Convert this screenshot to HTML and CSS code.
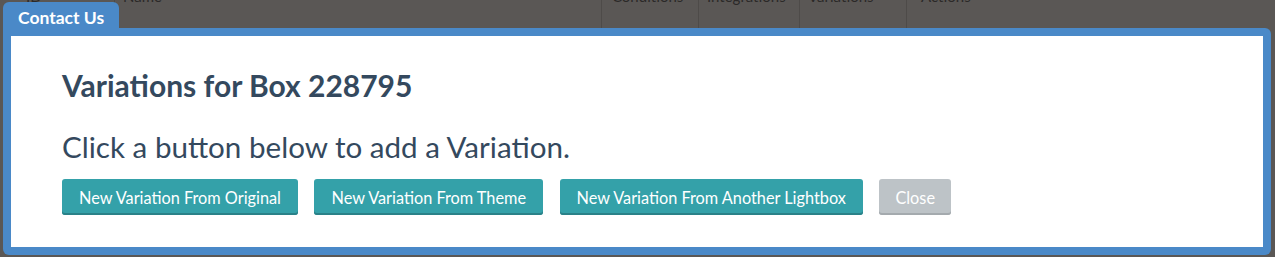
FILE: index.html
```html
<!DOCTYPE html>
<html>
<head>
<meta charset="utf-8">
<link rel="stylesheet" href="styles.css">
</head>
<body>
<div class="table-bg">
  <div class="thead">
    <div class="th th-id">ID</div>
    <div class="th th-name">Name</div>
    <div class="th th-cond">Conditions</div>
    <div class="th th-int">Integrations</div>
    <div class="th th-var">Variations</div>
    <div class="th th-act">Actions</div>
  </div>
</div>
<div class="modal">
  <div class="tab">Contact Us</div>
  <div class="frame">
    <div class="content">
      <h2 class="title">Variations for Box 228795</h2>
      <p class="lead">Click a button below to add a Variation.</p>
      <div class="buttons">
        <button class="btn btn-teal">New Variation From Original</button>
        <button class="btn btn-teal">New Variation From Theme</button>
        <button class="btn btn-teal">New Variation From Another Lightbox</button>
        <button class="btn btn-grey">Close</button>
      </div>
    </div>
  </div>
</div>
</body>
</html>
```
FILE: styles.css
```css
html, body {
  margin: 0;
  padding: 0;
}
body {
  width: 1275px;
  height: 257px;
  overflow: hidden;
  background: #5a5755;
  font-family: Lato, "Open Sans", sans-serif;
  position: relative;
}
.table-bg {
  height: 257px;
}
.thead {
  display: flex;
  height: 28px;
  margin-top: -12px;
  color: #2b2928;
  font-size: 15px;
}
.th {
  padding: 0 8px;
  line-height: 16px;
  border-left: 1px solid #4e4b49;
  height: 40px;
}
.th-id { width: 80px; border-left: none; padding-left: 26px; }
.th-name { width: 470px; }
.th-cond { width: 78px; padding-left: 10px; }
.th-int { width: 84px; }
.th-var { width: 90px; }
.th-act { width: 200px; padding-left: 14px; }

.modal {
  position: absolute;
  left: 3px;
  top: 2px;
  width: 1268px;
}
.tab {
  width: 116px;
  height: 26px;
  box-sizing: border-box;
  background: #4a89c8;
  border-radius: 6px 6px 0 0;
  color: #fff;
  font-weight: 700;
  font-size: 17.5px;
  line-height: 32px;
  padding-left: 15px;
}
.frame {
  background: #4a89c8;
  border-radius: 0 6px 6px 6px;
  padding: 8px;
}
.content {
  background: #fff;
  height: 211px;
  box-sizing: border-box;
  padding: 31px 51px 0;
  color: #34495e;
}
.title {
  margin: 0;
  font-size: 30px;
  font-weight: 700;
  line-height: 36px;
}
.lead {
  margin: 24px 0 0;
  font-size: 29.6px;
  font-weight: 400;
  line-height: 40px;
}
.buttons {
  display: flex;
  gap: 16.5px;
  margin-top: 12px;
}
.btn {
  font-family: inherit;
  font-size: 16.3px;
  color: #fff;
  border: none;
  border-radius: 3px;
  height: 36px;
  padding: 0 17px;
  cursor: pointer;
}
.btn-teal {
  background: #34a1a9;
  box-shadow: inset 0 -2px 0 #2a8188;
}
.btn-grey {
  background: #bdc3c7;
  box-shadow: inset 0 -2px 0 #a4aaae;
  padding: 0 16px;
}
```
